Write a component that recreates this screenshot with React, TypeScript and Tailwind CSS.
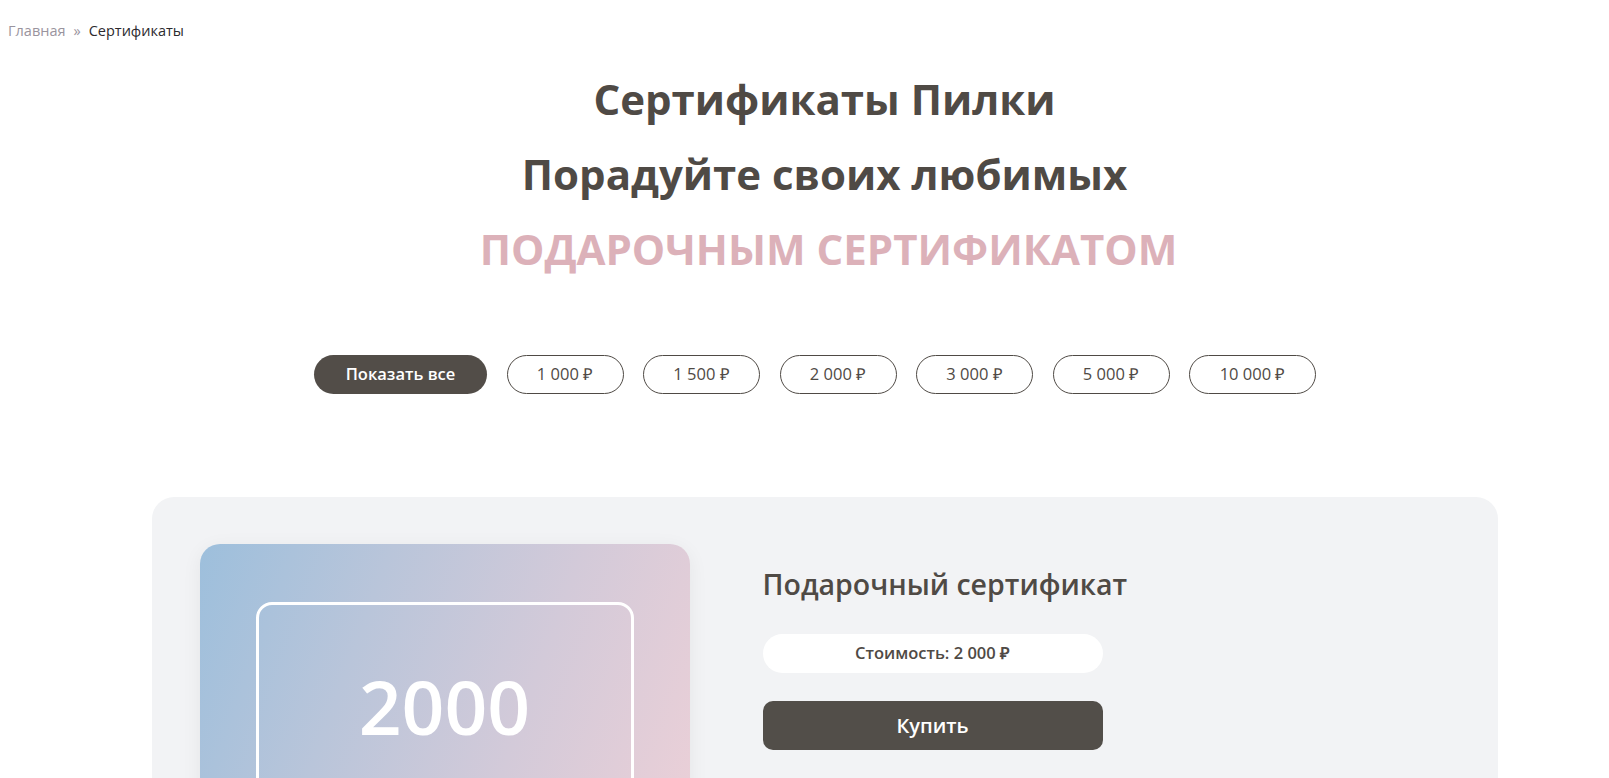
import React from "react";

const filters = ["1 000 ₽", "1 500 ₽", "2 000 ₽", "3 000 ₽", "5 000 ₽", "10 000 ₽"];

export default function App() {
  return (
    <div className="min-h-screen bg-white font-['Open_Sans',sans-serif] text-[#4f4a45]">
      <div className="px-[8px] pt-[20px] text-[14.5px] leading-[22px]">
        <span className="text-[#9a949e]">Главная</span>
        <span className="mx-[8px] text-[#9a949e]">»</span>
        <span className="text-[#2c2a2e]">Сертификаты</span>
      </div>

      <div className="pl-[40px]">
        <div className="mt-[29px] flex flex-col items-center text-center">
          <h1 className="text-[42px] font-bold leading-[56px]">Сертификаты Пилки</h1>
          <h2 className="mt-[19px] text-[42px] font-bold leading-[56px]">Порадуйте своих любимых</h2>
          <h2 className="mt-[19px] pl-[8px] text-[42px] font-bold leading-[56px] text-[#dcb1b9]">ПОДАРОЧНЫМ СЕРТИФИКАТОМ</h2>
        </div>

        <div className="mt-[78px] flex justify-center gap-[19.5px] pr-[19px]">
          <button className="h-[39px] w-[173px] rounded-full bg-[#524d48] text-[16.5px] font-semibold text-white">
            Показать все
          </button>
          {filters.map((f) => (
            <button
              key={f}
              className={`h-[39px] rounded-full border border-[#4f4a45] text-[16.5px] text-[#4f4a45] ${f === "10 000 ₽" ? "w-[127px]" : "w-[117px]"}`}
            >
              {f}
            </button>
          ))}
        </div>

        <div className="mx-auto mt-[103px] w-[1346px] rounded-[22px] bg-[#f2f3f5] px-[48px] pt-[47px] pb-[60px]">
          <div className="flex gap-[73px]">
            <div className="h-[420px] w-[490px] shrink-0 overflow-hidden rounded-[20px] bg-[linear-gradient(110deg,#9dbfdc_0%,#b9c5da_30%,#d3cad9_60%,#f1d1d7_100%)] shadow-[0_4px_20px_rgba(0,0,0,0.06)]">
              <div className="mx-[56px] mt-[58px] flex h-[320px] items-start justify-center rounded-[16px] border-[3px] border-white">
                <span className="mt-[56px] text-[75px] font-semibold leading-[90px] text-white">2000</span>
              </div>
            </div>
            <div className="w-[340px] pt-[20px]">
              <div className="whitespace-nowrap text-[28.5px] font-semibold leading-[40px] text-[#4f4a45]">Подарочный сертификат</div>
              <div className="mt-[30px] flex h-[39px] items-center justify-center rounded-full bg-white text-[16.5px] font-semibold text-[#4f4a45]">
                Стоимость: 2 000 ₽
              </div>
              <button className="mt-[28px] h-[49px] w-full rounded-[10px] bg-[#524e49] text-[20px] font-semibold text-white">
                Купить
              </button>
            </div>
          </div>
        </div>
      </div>
    </div>
  );
}
